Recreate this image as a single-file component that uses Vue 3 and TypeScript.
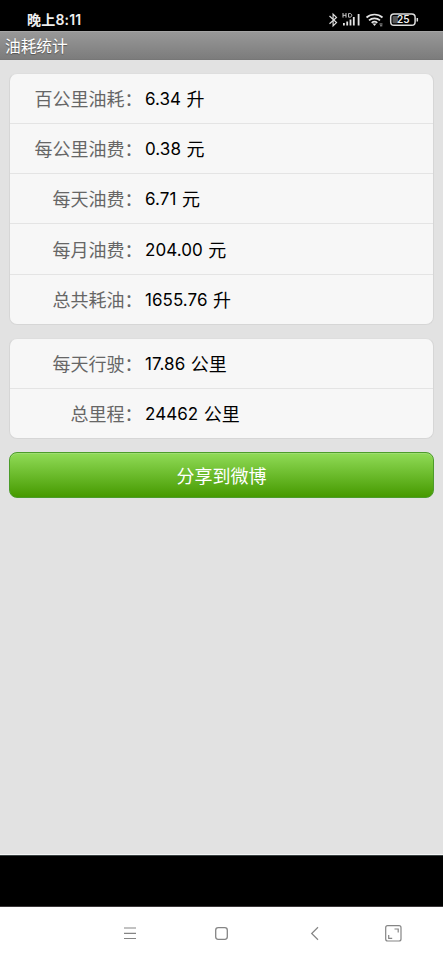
<script setup lang="ts">
interface Stat {
  label: string
  value: string
  unit: string
}

const groups: Stat[][] = [
  [
    { label: '百公里油耗', value: '6.34', unit: '升' },
    { label: '每公里油费', value: '0.38', unit: '元' },
    { label: '每天油费', value: '6.71', unit: '元' },
    { label: '每月油费', value: '204.00', unit: '元' },
    { label: '总共耗油', value: '1655.76', unit: '升' },
  ],
  [
    { label: '每天行驶', value: '17.86', unit: '公里' },
    { label: '总里程', value: '24462', unit: '公里' },
  ],
]
</script>

<template>
  <div class="screen">
    <div class="status">
      <span class="time">晚上8:11</span>
      <svg class="status-icons" width="92" height="18" viewBox="0 0 92 18" fill="none">
        <path d="M1.500 6l7 6.600-3.400 3.200V4.200L8.500 7.400 1.500 13.800" stroke="#ddd" stroke-width="1.200" />
        <path d="M15 3v4.600M18 3v4.600M15 5.300h3M20.600 3.500v3.700h1.200c2.600 0 2.600-3.700 0-3.700z" stroke="#ccc" stroke-width="1" />
        <path d="M15.900 13v2.400M19.200 11.500v3.900M22.500 9.400v6M25.800 7v8.400M30.600 4v11.400" stroke="#e4e4e4" stroke-width="1.800" />
        <path d="M38.500 7.500c4.500-4 11.500-4 16 0M41 10.300c3-2.600 8-2.600 11 0M43.700 12.900c1.600-1.400 4-1.400 5.600 0" stroke="#e4e4e4" stroke-width="1.700" />
        <path d="M44.500 13.500L46.500 15.900L48.500 13.500Z" fill="#e4e4e4" />
        <path d="M51.500 14h3M52 15.800h2.300" stroke="#aaa" stroke-width="1" />
        <rect x="62.700" y="4" width="24.400" height="11.200" rx="3.300" stroke="#ddd" stroke-width="1.500" />
        <rect x="64.500" y="6" width="5.500" height="7.300" rx="1" fill="#555" />
        <path d="M89.300 8v3.500" stroke="#ddd" stroke-width="1.500" />
        <text x="75.300" y="13" text-anchor="middle" class="battery">25</text>
      </svg>
    </div>

    <header class="title">油耗统计</header>

    <main class="content">
      <section v-for="(group, i) in groups" :key="i" class="card">
        <div v-for="stat in group" :key="stat.label" class="row">
          <span class="label">{{ stat.label }}：</span>
          <span class="value">{{ stat.value }}</span>
          <span class="unit">{{ stat.unit }}</span>
        </div>
      </section>
      <button class="share" type="button">分享到微博</button>
    </main>

    <div class="spacer"></div>

    <nav class="nav">
      <svg width="443" height="53" viewBox="0 0 443 53" fill="none" stroke="#858585">
        <path d="M124 21h12M124 26.300h12M124 31.500h12" stroke-width="1.200" />
        <rect x="215.700" y="20.700" width="11.600" height="11.600" rx="2.500" stroke-width="1.300" />
        <path d="M318 20.300l-6.300 6.200 6.300 6.200" stroke-width="1.200" />
        <rect x="385.700" y="18.700" width="15.300" height="15.300" rx="2" stroke-width="1.200" />
        <path d="M394.500 22h3.700v3.500M388.700 28v3.300h3.500" stroke-width="1.200" />
      </svg>
    </nav>
  </div>
</template>

<style>
body {
  margin: 0;
}
</style>

<style scoped>
.screen {
  width: 443px;
  height: 960px;
  display: flex;
  flex-direction: column;
  overflow: hidden;
  background: #e2e2e2;
  font-family: "Noto Sans CJK SC", sans-serif;
}
.status {
  box-sizing: border-box;
  height: 31px;
  flex: none;
  display: flex;
  justify-content: space-between;
  padding: 10px 23px 0 27px;
  background: #000;
  color: #eee;
}
.time {
  font: 600 14px/19px Inter, "Noto Sans CJK SC", sans-serif;
  letter-spacing: 0.200px;
}
.battery {
  font: 600 10px Inter, sans-serif;
  fill: #f0f0f0;
}
.title {
  box-sizing: border-box;
  height: 29px;
  flex: none;
  padding-left: 5px;
  border-top: 1px solid #a5a5a5;
  border-bottom: 1px solid #777;
  background: linear-gradient(#989898, #7c7c7c);
  color: #fff;
  font-size: 15.700px;
  line-height: 27px;
  text-shadow: 0 1px 1px #555;
}
.content {
  flex: 1;
  display: flex;
  flex-direction: column;
  gap: 13px;
  padding: 12.500px 9px 0;
  border-bottom: 1px solid #f5f5f5;
}
.card {
  box-sizing: border-box;
  border: 1px solid #d6d6d6;
  border-top-color: #dedede;
  border-radius: 8px;
  background: #f7f7f7;
}
.row {
  box-sizing: border-box;
  height: 50.300px;
  display: flex;
  align-items: center;
  padding-bottom: 0.600px;
  border-bottom: 1px solid #e4e4e4;
  font-size: 18px;
  line-height: 26px;
}
.row:last-child {
  height: 49px;
  border-bottom: 0;
}
.label {
  box-sizing: border-box;
  width: 135px;
  flex: none;
  padding-right: 2.500px;
  text-align: right;
  white-space: nowrap;
  color: #666;
}
.value {
  margin-right: 5.500px;
  padding-top: 2px;
  font-family: Inter, sans-serif;
  font-size: 17px;
  letter-spacing: 0.050px;
  color: #000;
}
.unit {
  color: #000;
}
.share {
  box-sizing: border-box;
  height: 46px;
  padding: 0;
  border: 1px solid #4c9c2a;
  border-radius: 8px;
  background: linear-gradient(#90db57, #469a00);
  box-shadow: inset 0 1px 0 #9fdc72;
  color: #fff;
  font: 18px/44px "Noto Sans CJK SC", sans-serif;
}
.spacer {
  box-sizing: border-box;
  height: 52px;
  flex: none;
  border-top: 1px solid #394141;
  border-bottom: 1px solid #3b3739;
  background: #000;
}
.nav {
  height: 53px;
  flex: none;
  background: #fff;
}
</style>
